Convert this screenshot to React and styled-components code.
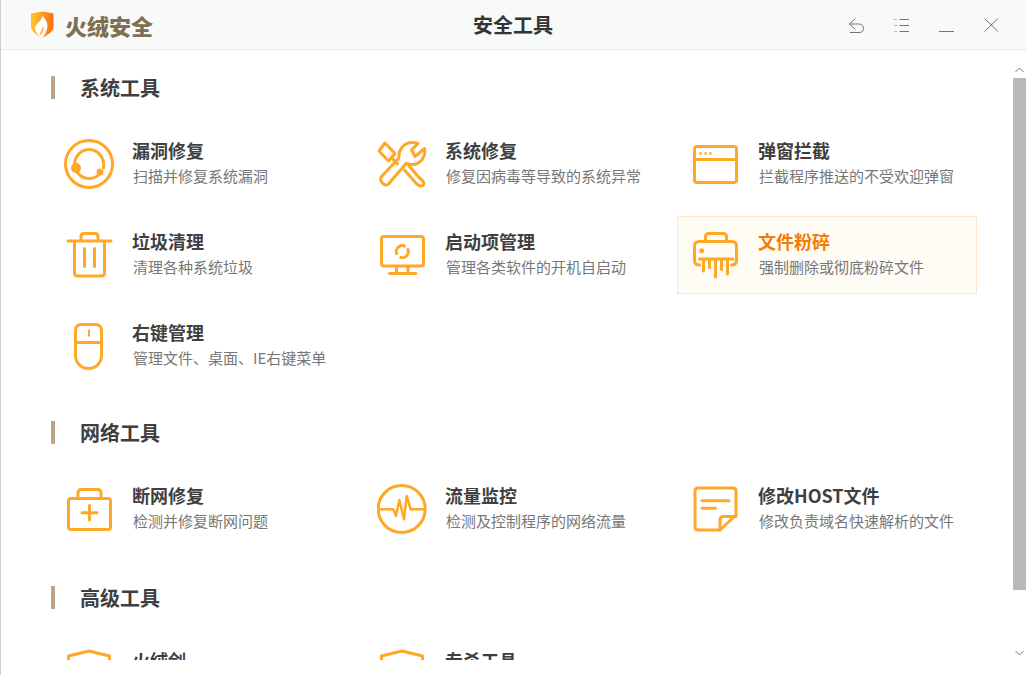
import React from 'react';
import styled, { createGlobalStyle } from 'styled-components';

const ORANGE = '#ffa726';
const FONT = '"Noto Sans CJK SC", "Noto Sans", "Liberation Sans", sans-serif';

const GlobalStyle = createGlobalStyle`
  html, body {
    margin: 0;
    padding: 0;
    background: #fff;
  }
  body {
    font-family: ${FONT};
    overflow: hidden;
  }
`;

const Window = styled.div`
  box-sizing: border-box;
  width: 1026px;
  height: 675px;
  display: flex;
  flex-direction: column;
  overflow: hidden;
  background: #fff;
  border-left: 1px solid #cfcfcf;
`;

const TitleBar = styled.header`
  flex: none;
  height: 49px;
  display: grid;
  grid-template-columns: 1fr auto 1fr;
  align-items: center;
  background: #f8f9f9;
  border-bottom: 1px solid #ebebeb;
`;

const Brand = styled.div`
  display: flex;
  align-items: center;
  gap: 11px;
  padding-left: 29px;
`;

const BrandName = styled.span`
  font-size: 22px;
  font-weight: 900;
  line-height: 26px;
  color: #7f6f54;
`;

const PageTitle = styled.h1`
  margin: 0 0 0 -1px;
  font-size: 20px;
  font-weight: 700;
  line-height: 26px;
  color: #333;
`;

const Controls = styled.div`
  display: flex;
  justify-content: flex-end;
  gap: 30px;
  padding-right: 27px;
  margin-top: 2px;
`;

const ControlButton = styled.button`
  width: 15px;
  height: 15px;
  padding: 0;
  border: 0;
  background: none;
  color: #747474;
  svg {
    display: block;
    overflow: visible;
  }
`;

const Body = styled.div`
  flex: 1;
  min-height: 0;
  display: flex;
`;

const Content = styled.main`
  flex: 1;
  height: 610px;
  overflow: hidden;
  padding: 26px 0 0 50px;
  box-sizing: border-box;
`;

const Section = styled.section`
  margin-bottom: ${props => props.$gap}px;
`;

const SectionHead = styled.div`
  height: 23px;
  display: flex;
  align-items: center;
  border-left: 4px solid #bfa588;
  padding-left: 25px;
  font-size: 20px;
  font-weight: 700;
  color: #3f3f3f;
`;

const ToolGrid = styled.div`
  display: grid;
  grid-template-columns: repeat(3, 300px);
  gap: 13px;
  margin-top: 26px;
`;

const ToolCard = styled.div`
  box-sizing: border-box;
  height: 78px;
  display: flex;
  align-items: center;
  gap: 18px;
  padding-left: 12px;
  border: 1px solid ${props => (props.$active ? '#fde7c8' : 'transparent')};
  background: ${props => (props.$active ? '#fffbf5' : 'transparent')};
`;

const ToolIcon = styled.svg`
  flex: none;
  width: 50px;
  height: 50px;
  fill: none;
  stroke: ${ORANGE};
  stroke-width: 3;
  stroke-linecap: round;
  stroke-linejoin: round;
`;

const ToolText = styled.div`
  display: flex;
  flex-direction: column;
  margin-top: -1px;
`;

const ToolName = styled.div`
  font-size: 18px;
  font-weight: 700;
  line-height: 24px;
  color: ${props => (props.$active ? '#f57c00' : '#3f3f3f')};
`;

const ToolDesc = styled.div`
  min-height: 27px;
  margin-left: 1px;
  font-size: 15px;
  line-height: 27px;
  color: #777;
`;

const ScrollTrack = styled.div`
  flex: none;
  width: 13px;
  display: flex;
  flex-direction: column;
  align-items: center;
  padding-top: 17px;
`;

const ScrollArrow = styled.svg`
  flex: none;
  width: 9px;
  height: 6px;
  fill: none;
  stroke: #777;
  stroke-width: 1;
`;

const ScrollThumb = styled.div`
  flex: none;
  width: 13px;
  height: 512px;
  margin: 5px 0 60px;
  background: #b9b9b9;
`;

const Dot = styled.circle`
  fill: ${ORANGE};
  stroke: none;
`;

const icons = {
  bug: (
    <>
      <circle cx="25" cy="25" r="23.5" />
      <path d="M11 29C9 19 16 10.5 25 10.5C34 10.5 41 19 39.5 29" />
      <path d="M12 31C15 37 20 39.5 25 39.5C30 39.5 34 37.5 37 33" />
      <Dot cx="12" cy="29" r="5" />
      <Dot cx="36" cy="33" r="3.5" />
    </>
  ),
  tools: (
    <>
      <path d="M8 4L18 14.500L11.500 22L2 12Z" />
      <path d="M15 19L20.500 25" />
      <path d="M27.500 31L38 43C40 45.500 41.500 47 44 47C46.500 47 47.500 45 46.500 43C45.500 41 44 40 42.500 39L32 27" />
      <path d="M4.500 37.500L22 19C21 11 27 3.500 35 3.500C37 3.500 39 3.800 41 4.500L34.500 11L38 17.500L47.500 9.500C49.500 18 43 25.500 35 25.500C32.500 25.500 30.500 25 29 24.500L11.500 45C8 48.500 1.500 42 4.500 37.500Z" />
    </>
  ),
  window: (
    <>
      <rect x="4.500" y="7.500" width="42" height="36" rx="2.500" />
      <path d="M4.500 20.500H46.500" />
      <path d="M9.500 14.500H11.500M14.500 14.500H16.500M19.500 14.500H21.500" strokeLinecap="butt" />
    </>
  ),
  trash: (
    <>
      <path d="M4 11H47" />
      <path d="M17 10V6.500C17 4.500 18 3.500 20 3.500H31C33 3.500 34 4.500 34 6.500V10" />
      <path d="M10.500 12V43C10.500 45 11.500 46 13.500 46H37.500C39.500 46 40.500 45 40.500 43V12" />
      <path d="M20.500 18.500V36.500M30.500 18.500V36.500" />
    </>
  ),
  mouse: (
    <>
      <path d="M11.500 9.500C11.500 5.500 13.500 3.500 17.500 3.500H31.500C35.500 3.500 37.500 5.500 37.500 9.500V34.500C37.500 42 31.500 47.500 24.500 47.500C17.500 47.500 11.500 42 11.500 34.500Z" />
      <path d="M11.500 21.500H37.500" />
      <path d="M25 8.500V15.500" strokeWidth="2" strokeLinecap="butt" />
    </>
  ),
  monitor: (
    <>
      <rect x="4.500" y="6.500" width="42" height="29.500" rx="2.500" />
      <path d="M19.500 36.500V43M31 36.500V43M12.500 43.500H39" />
      <circle cx="25.300" cy="21.700" r="6" strokeDasharray="15.500 3.350" strokeLinecap="butt" transform="rotate(-35 25.300 21.700)" />
    </>
  ),
  shredder: (
    <>
      <path d="M15.500 11V7C15.500 4.500 16.500 3.500 19 3.500H33C35.500 3.500 36.500 4.500 36.500 7V11" />
      <path d="M9.500 35C6.500 35 4.500 33.500 4.500 30.500V16C4.500 13 6.500 11.500 9.500 11.500H41.500C44.500 11.500 46.500 13 46.500 16V30.500C46.500 33.500 44.500 35 41.500 35" />
      <path d="M9.500 29H43" />
      <path d="M13.500 30V41M19.500 30V37.500M25.500 30V47M31.500 30V39.500M37.500 30V44" />
      <Dot cx="11.700" cy="20.700" r="2.500" />
    </>
  ),
  kit: (
    <>
      <rect x="4.500" y="14.500" width="42" height="31" rx="2.500" />
      <path d="M14 14V9C14 6.500 15.500 5.500 17.500 5.500H33.500C35.500 5.500 37 6.500 37 9V14" />
      <path d="M18 28.700H33M25.500 21.500V36" />
    </>
  ),
  pulse: (
    <>
      <circle cx="24.700" cy="25" r="23.500" />
      <path d="M1.500 25.300H16.300L19 32L22.300 16L27 35.300L29.700 12L33.700 25.300H48" strokeWidth="2.500" />
    </>
  ),
  note: (
    <>
      <path d="M30 46H8C6 46 5 45 5 43V7C5 5 6 4 8 4H43C45 4 46 5 46 7V31Z" />
      <path d="M30 46V36C30 33.500 31 32.500 33.500 32.500H46" />
      <path d="M12 16.700H39M12 24.300H25.500" />
    </>
  ),
  shield: (
    <path d="M4.500 7L25 2L45.500 7V30C45.500 38 35 44 25 47C15 44 4.500 38 4.500 30Z" />
  ),
  shieldDot: (
    <>
      <path d="M4.500 7L25 2L45.500 7V30C45.500 38 35 44 25 47C15 44 4.500 38 4.500 30Z" />
      <circle cx="25" cy="19" r="6" />
    </>
  ),
};

const sections = [
  {
    title: '系统工具',
    gap: 36,
    tools: [
      { icon: 'bug', name: '漏洞修复', desc: '扫描并修复系统漏洞' },
      { icon: 'tools', name: '系统修复', desc: '修复因病毒等导致的系统异常' },
      { icon: 'window', name: '弹窗拦截', desc: '拦截程序推送的不受欢迎弹窗' },
      { icon: 'trash', name: '垃圾清理', desc: '清理各种系统垃圾' },
      { icon: 'monitor', name: '启动项管理', desc: '管理各类软件的开机自启动' },
      { icon: 'shredder', name: '文件粉碎', desc: '强制删除或彻底粉碎文件', active: true },
      { icon: 'mouse', name: '右键管理', desc: '管理文件、桌面、IE右键菜单' },
    ],
  },
  {
    title: '网络工具',
    gap: 38,
    tools: [
      { icon: 'kit', name: '断网修复', desc: '检测并修复断网问题' },
      { icon: 'pulse', name: '流量监控', desc: '检测及控制程序的网络流量' },
      { icon: 'note', name: '修改HOST文件', desc: '修改负责域名快速解析的文件' },
    ],
  },
  {
    title: '高级工具',
    gap: 0,
    tools: [
      { icon: 'shield', name: '火绒剑' },
      { icon: 'shieldDot', name: '专杀工具' },
    ],
  },
];

const Logo = () => (
  <svg width="24" height="27" viewBox="0 0 24 27">
    <defs>
      <linearGradient id="logoFill" x1="0" y1="0" x2="1" y2="0">
        <stop offset="0" stopColor="#ffc62e" />
        <stop offset="0.55" stopColor="#ff9a1c" />
        <stop offset="1" stopColor="#fb6a10" />
      </linearGradient>
    </defs>
    <path d="M1 2.500L13 0.500L23.500 2.500V16C23.500 20.500 17 24.500 12.500 26.500C8 24.500 1 20.500 1 16Z" fill="url(#logoFill)" />
    <path d="M12.500 26.500C8 24.500 5 21 5 17.500C5 13 11 10.500 12.700 5C16 9 18.500 13 17 18C16.200 21.500 14.500 24.500 12.500 26.500Z" fill="#fff" />
    <path d="M9.500 24.500C10 20.500 12.500 18 13 14.500C14.500 18 13.500 22 9.500 24.500Z" fill="#ffb84a" />
  </svg>
);

const App = () => (
  <Window>
    <GlobalStyle />
    <TitleBar>
      <Brand>
        <Logo />
        <BrandName>火绒安全</BrandName>
      </Brand>
      <PageTitle>安全工具</PageTitle>
      <Controls>
        <ControlButton aria-label="返回">
          <svg width="15" height="15" viewBox="0 0 15 15" fill="none" stroke="currentColor">
            <path d="M6.500 0.500L0.500 6L6.500 11.500M0.500 6H10C13 6 14.500 8 14.500 10.500C14.500 13 13 14.500 10 14.500H1" />
          </svg>
        </ControlButton>
        <ControlButton aria-label="菜单">
          <svg width="15" height="15" viewBox="0 0 15 15" fill="none" stroke="currentColor">
            <path d="M0.500 1.500H3M0.500 7.500H3M0.500 13.500H3" strokeDasharray="1 1" />
            <path d="M5.500 1.500H15M5.500 7.500H15M5.500 13.500H15" />
          </svg>
        </ControlButton>
        <ControlButton aria-label="最小化">
          <svg width="15" height="15" viewBox="0 0 15 15" fill="none" stroke="currentColor">
            <path d="M0 13.500H15" />
          </svg>
        </ControlButton>
        <ControlButton aria-label="关闭">
          <svg width="15" height="15" viewBox="0 0 15 15" fill="none" stroke="currentColor">
            <path d="M0.500 0.500L14 13.500M14 0.500L0.500 13.500" />
          </svg>
        </ControlButton>
      </Controls>
    </TitleBar>
    <Body>
      <Content>
        {sections.map(section => (
          <Section key={section.title} $gap={section.gap}>
            <SectionHead>{section.title}</SectionHead>
            <ToolGrid>
              {section.tools.map(tool => (
                <ToolCard key={tool.name} $active={tool.active}>
                  <ToolIcon viewBox="0 0 50 50">{icons[tool.icon]}</ToolIcon>
                  <ToolText>
                    <ToolName $active={tool.active}>{tool.name}</ToolName>
                    <ToolDesc>{tool.desc}</ToolDesc>
                  </ToolText>
                </ToolCard>
              ))}
            </ToolGrid>
          </Section>
        ))}
      </Content>
      <ScrollTrack>
        <ScrollArrow viewBox="0 0 9 6"><path d="M0.500 5L4.500 1L8.500 5" /></ScrollArrow>
        <ScrollThumb />
        <ScrollArrow viewBox="0 0 9 6"><path d="M0.500 1L4.500 5L8.500 1" /></ScrollArrow>
      </ScrollTrack>
    </Body>
  </Window>
);

export default App;
